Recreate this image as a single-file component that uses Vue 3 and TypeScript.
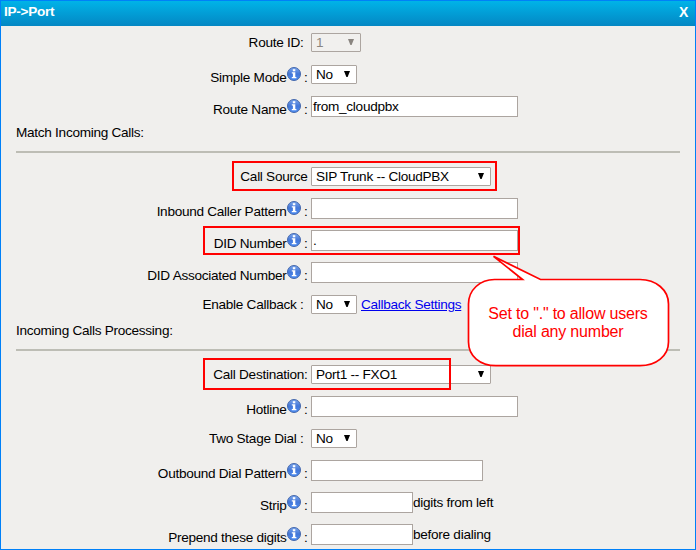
<script setup lang="ts">
interface Field {
  label: string
  info?: boolean
  colon?: string
  kind: 'select' | 'input'
  value?: string
  size: string
  shift?: string
  disabled?: boolean
  suffix?: string
  link?: string
  mark?: string
}

interface Section {
  title?: string
  fields: Field[]
}

const sections: Section[] = [
  {
    fields: [
      { label: 'Route ID', colon: ':', kind: 'select', value: '1', size: 'w50', shift: 'inset', disabled: true },
      { label: 'Simple Mode', info: true, colon: ' :', kind: 'select', value: 'No', size: 'w46' },
      { label: 'Route Name', info: true, colon: ' :', kind: 'input', value: 'from_cloudpbx', size: 'w207' },
    ],
  },
  {
    title: 'Match Incoming Calls:',
    fields: [
      { label: 'Call Source', kind: 'select', value: 'SIP Trunk -- CloudPBX', size: 'w180', mark: 'mark-source' },
      { label: 'Inbound Caller Pattern', info: true, colon: ' :', kind: 'input', size: 'w207' },
      { label: 'DID Number', info: true, colon: ' :', kind: 'input', value: '.', size: 'w207', mark: 'mark-did' },
      { label: 'DID Associated Number', info: true, colon: ' :', kind: 'input', size: 'w207' },
      { label: 'Enable Callback', colon: ' :', kind: 'select', value: 'No', size: 'w46', shift: 'inset', link: 'Callback Settings' },
    ],
  },
  {
    title: 'Incoming Calls Processing:',
    fields: [
      { label: 'Call Destination', colon: ':', kind: 'select', value: 'Port1 -- FXO1', size: 'w180', mark: 'mark-dest' },
      { label: 'Hotline', info: true, colon: ' :', kind: 'input', size: 'w207' },
      { label: 'Two Stage Dial', colon: ' :', kind: 'select', value: 'No', size: 'w46', shift: 'inset' },
      { label: 'Outbound Dial Pattern', info: true, colon: ' :', kind: 'input', size: 'w172' },
      { label: 'Strip', info: true, colon: ' :', kind: 'input', size: 'w102', suffix: 'digits from left' },
      { label: 'Prepend these digits', info: true, colon: ' :', kind: 'input', size: 'w102', suffix: 'before dialing' },
    ],
  },
]
</script>

<template>
  <div class="dialog">
    <header class="bar">
      <span>IP-&gt;Port</span>
      <span class="close">X</span>
    </header>
    <svg class="defs" width="0" height="0">
      <defs>
        <linearGradient id="ball" x1="0" y1="0" x2="0" y2="1">
          <stop offset="0" stop-color="#7ba6ec" />
          <stop offset="0.5" stop-color="#4477d8" />
          <stop offset="1" stop-color="#4a8cf4" />
        </linearGradient>
      </defs>
    </svg>
    <section v-for="(section, s) in sections" :key="s">
      <h2 v-if="section.title">{{ section.title }}</h2>
      <div
        v-for="field in section.fields"
        :key="field.label"
        class="row"
        :class="[field.kind, { informed: field.info }]"
      >
        <div class="label" :class="field.shift">
          <span>{{ field.label }}</span>
          <svg v-if="field.info" class="info" width="14" height="14" viewBox="0 0 14 14">
            <circle cx="7" cy="7" r="6.5" fill="url(#ball)" stroke="#4568ac" stroke-width="1" />
            <rect x="5.8" y="2.2" width="2.5" height="2.1" fill="#fff" />
            <path d="M4.8 5.3H8.3V10H9.4V11.3H4.8V10H5.9V6.5H4.8Z" fill="#fff" />
          </svg>
          <span class="colon">{{ field.colon }}</span>
        </div>
        <div class="control" :class="[field.size, { disabled: field.disabled }]">
          <span>{{ field.value }}</span>
          <svg v-if="field.kind === 'select'" class="arrow" width="6" height="6" viewBox="0 0 6 6">
            <path d="M0 0H6L3.6 6H2.4Z" fill="currentColor" />
          </svg>
        </div>
        <span v-if="field.suffix" class="suffix">{{ field.suffix }}</span>
        <a v-if="field.link" class="link">{{ field.link }}</a>
        <div v-if="field.mark" class="mark" :class="field.mark"></div>
      </div>
    </section>
    <div class="callout">
      <svg width="206" height="114" viewBox="0 0 206 114">
        <path
          d="M29.5 24.5H57.5L28.5 1.3L75.5 24.5H175C191 24.5 203.5 35 203.5 49V87C203.5 101 191 110.7 175 110.7H31C15 110.7 3.5 101 3.5 87V49C3.5 35 15 24.5 29.5 24.5Z"
          fill="#fff"
          stroke="#f00"
          stroke-width="1.7"
        />
      </svg>
      <p>Set to "." to allow users<br />dial any number</p>
    </div>
  </div>
</template>

<style>
body {
  margin: 0;
}
</style>

<style scoped>
.dialog {
  position: relative;
  box-sizing: border-box;
  width: 696px;
  height: 550px;
  overflow: hidden;
  border: 1px solid #0080f8;
  background: #f0efed;
  color: #000;
  font: 13.6px/15px "Liberation Sans", Arial, sans-serif;
  letter-spacing: -0.28px;
}
.bar {
  display: flex;
  justify-content: space-between;
  box-sizing: border-box;
  height: 25px;
  margin-bottom: 7px;
  padding: 3px 7px 0 3px;
  background: linear-gradient(#00b3e8, #0487c3);
  color: #fff;
  font-weight: bold;
}
.close {
  font-size: 14px;
  line-height: 17px;
}
.defs {
  position: absolute;
}
h2 {
  box-sizing: border-box;
  height: 28px;
  margin: 8px 15px 14px;
  border-bottom: 2px solid #bdbdb5;
  font: inherit;
}
section:last-of-type h2 {
  margin-top: 9px;
}
.row {
  position: relative;
  display: flex;
  align-items: flex-start;
}
.row.select {
  height: 19px;
}
.row.input {
  height: 21px;
}
.row + .row {
  margin-top: 11px;
}
.row.select + .row.input,
.row.input + .row.select {
  margin-top: 12px;
}
.row.select + .row.select {
  margin-top: 13px;
}
.label {
  display: flex;
  justify-content: flex-end;
  box-sizing: border-box;
  width: 307px;
  margin-right: 3px;
  padding: 2px 0.5px 0 0;
  white-space: pre;
}
.select.informed .label {
  padding-top: 5px;
}
.input .label {
  padding-top: 6px;
}
.label.inset {
  padding-right: 4.5px;
}
.info {
  margin-top: -3px;
}
.control {
  display: flex;
  justify-content: space-between;
  box-sizing: border-box;
  height: 100%;
  border: 1px solid #aca5a0;
  background: #fff;
  white-space: pre;
}
.input .control {
  padding: 2px 1px 0;
}
.select .control {
  padding: 1px 6px 0 4px;
  border-radius: 1px;
}
.select .control.disabled {
  background: #f1f0ee;
  color: #8a8580;
}
.arrow {
  margin-top: 4px;
}
.w46 { width: 46px; }
.w50 { width: 50px; }
.w102 { width: 102px; }
.w172 { width: 172px; }
.w180 { width: 180px; }
.w207 { width: 207px; }
.suffix {
  padding-top: 3px;
}
.link {
  padding: 2px 0 0 4px;
  color: #0000ee;
  text-decoration: underline;
}
.mark {
  position: absolute;
  box-sizing: border-box;
  border: 2px solid #f00;
}
.mark-source {
  left: 231px;
  top: -6px;
  width: 265px;
  height: 30px;
}
.mark-did {
  left: 202px;
  top: -4px;
  width: 317px;
  height: 29px;
}
.mark-dest {
  left: 202px;
  top: -7px;
  width: 248px;
  height: 32px;
}
.callout {
  position: absolute;
  left: 464px;
  top: 254px;
  width: 206px;
  height: 114px;
  color: #f00;
  font-size: 16px;
  line-height: 18px;
  letter-spacing: -0.2px;
  text-align: center;
}
.callout p {
  position: absolute;
  top: 50px;
  left: 0;
  width: 100%;
  margin: 0;
}
</style>
